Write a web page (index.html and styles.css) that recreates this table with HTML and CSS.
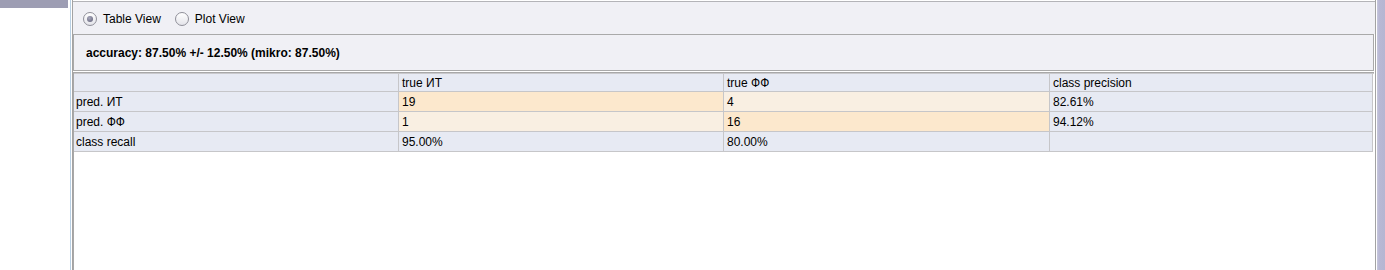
FILE: index.html
```html
<!DOCTYPE html>
<html>
<head>
<meta charset="utf-8">
<link rel="stylesheet" href="styles.css">
</head>
<body>
<div class="app">
  <div class="sidebar"><div class="sidebar-bar"></div></div>
  <div class="divider"></div>
  <div class="gap"></div>
  <div class="main">
    <div class="toolbar">
      <label class="radio"><span class="radio-dot on"></span>Table View</label>
      <label class="radio"><span class="radio-dot"></span>Plot View</label>
    </div>
    <div class="summary">accuracy: 87.50% +/- 12.50% (mikro: 87.50%)</div>
    <div class="pane">
      <div class="matrix">
        <div class="cell head"></div>
        <div class="cell head">true ИТ</div>
        <div class="cell head">true ФФ</div>
        <div class="cell head">class precision</div>

        <div class="cell head">pred. ИТ</div>
        <div class="cell hot">19</div>
        <div class="cell warm">4</div>
        <div class="cell head">82.61%</div>

        <div class="cell head">pred. ФФ</div>
        <div class="cell warm">1</div>
        <div class="cell hot">16</div>
        <div class="cell head">94.12%</div>

        <div class="cell head">class recall</div>
        <div class="cell head">95.00%</div>
        <div class="cell head">80.00%</div>
        <div class="cell head"></div>
      </div>
    </div>
  </div>
  <div class="gap"></div>
  <div class="scrollbar"></div>
</div>
</body>
</html>
```
FILE: styles.css
```css
html, body {
  margin: 0;
  padding: 0;
  background: #ffffff;
}
body {
  width: 1385px;
  height: 270px;
  overflow: hidden;
  font-family: "Liberation Sans", Arial, sans-serif;
  font-size: 12px;
  color: #000;
}
.app {
  display: flex;
  height: 270px;
}
.sidebar {
  width: 70px;
  background: #ffffff;
}
.sidebar-bar {
  width: 68px;
  height: 8px;
  background: #9d9db3;
}
.divider {
  width: 1px;
  background: #b9d0e4;
}
.gap {
  width: 1px;
  background: #ffffff;
}
.main {
  width: 1302px;
  border-left: 1px solid #a3a3a3;
  border-right: 1px solid #a3a3a3;
  display: flex;
  flex-direction: column;
  background: #ffffff;
}
.toolbar {
  margin-top: 1px;
  border-top: 1px solid #b4b4b8;
  height: 30px;
  padding-top: 2px;
  background: #f0f0f5;
  display: flex;
  align-items: center;
  padding-left: 10px;
  gap: 14px;
}
.radio {
  display: flex;
  align-items: center;
  gap: 6px;
  line-height: 14px;
}
.radio-dot {
  width: 12px;
  height: 12px;
  border: 1px solid #8f8f99;
  border-radius: 50%;
  background: linear-gradient(#ffffff, #e4e4ea);
  display: flex;
  align-items: center;
  justify-content: center;
}
.radio-dot.on::after {
  content: "";
  width: 6px;
  height: 6px;
  border-radius: 50%;
  background: radial-gradient(circle at 40% 35%, #a8a8bc, #5d5d74);
}
.summary {
  height: 35px;
  margin-right: 1px;
  border: 1px solid #a9a9a9;
  background: #f0f0f5;
  font-weight: bold;
  font-size: 12px;
  display: flex;
  align-items: center;
  padding-left: 12px;
}
.pane {
  flex: 1;
  margin-top: 1px;
  margin-right: 1px;
  border-top: 1px solid #a8a8a8;
  border-left: 1px solid #a8a8a8;
  background: #ffffff;
}
.matrix {
  display: grid;
  grid-template-columns: 325px 325px 326px 323px;
  grid-template-rows: 18px 20px 20px 20px;
  border-top: 1px solid #c9c9cc;
}
.cell {
  border-right: 1px solid #c6c6c9;
  border-bottom: 1px solid #c6c6c9;
  padding-left: 3px;
  display: flex;
  align-items: center;
  white-space: nowrap;
}
.matrix .cell:nth-child(4n+1) {
  padding-left: 2px;
}
.head {
  background: #e7eaf3;
}
.hot {
  background: #fce8cd;
}
.warm {
  background: #f9efe2;
}
.scrollbar {
  width: 8px;
  background: linear-gradient(90deg, #c8c8de 0, #b8b8d4 2px, #b6b6d2 100%);
}
```
